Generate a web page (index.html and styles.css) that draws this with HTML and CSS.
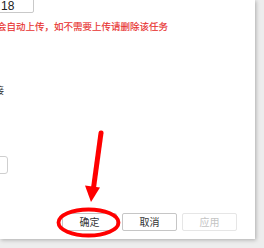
FILE: index.html
```html
<!DOCTYPE html>
<html lang="zh">
<head>
<meta charset="utf-8">
<link rel="stylesheet" href="styles.css">
</head>
<body>
<div class="stage">
  <div class="dialog">
    <div class="num-input">18</div>
    <div class="warn">会自动上传，如不需要上传请删除该任务</div>
    <div class="label">接</div>
    <div class="field"></div>
    <div class="footer">
      <button class="btn">确定</button>
      <button class="btn">取消</button>
      <button class="btn disabled">应用</button>
    </div>
  </div>
  <svg class="annot" width="264" height="248" viewBox="0 0 264 248">
    <line x1="101" y1="133" x2="93.5" y2="188" stroke="#f00" stroke-width="5" stroke-linecap="round"/>
    <polygon points="85,185.5 100,187.5 91,202" fill="#f00"/>
    <ellipse cx="88.5" cy="222.5" rx="30" ry="13" fill="none" stroke="#f00" stroke-width="3.8"/>
  </svg>
</div>
</body>
</html>
```

FILE: styles.css
```css
html, body {
  margin: 0;
  padding: 0;
}
body {
  background: #ededed;
  width: 264px;
  height: 248px;
  overflow: hidden;
  font-family: "Noto Sans CJK SC", "Liberation Sans", sans-serif;
}
.stage {
  position: relative;
  width: 264px;
  height: 248px;
}
.dialog {
  width: 255px;
  height: 239px;
  background: #fff;
  box-shadow: 1px 1px 4px rgba(0, 0, 0, 0.28);
  display: flex;
  flex-direction: column;
  overflow: hidden;
  box-sizing: border-box;
}
.num-input {
  margin-top: -6px;
  margin-left: -6px;
  width: 40px;
  height: 19px;
  box-sizing: border-box;
  border: 1px solid #c9c9c9;
  border-radius: 2px;
  font-family: "Liberation Sans", sans-serif;
  font-size: 12px;
  line-height: 22px;
  padding-left: 6px;
  color: #222;
}
.warn {
  margin-top: 7px;
  margin-left: -3px;
  font-size: 9.5px;
  line-height: 12px;
  color: #e8322f;
  white-space: nowrap;
  -webkit-text-stroke: 0.15px #e8322f;
}
.label {
  margin-top: 52px;
  margin-left: -5.5px;
  font-size: 9.5px;
  line-height: 12px;
  color: #333;
}
.field {
  margin-top: 60px;
  margin-left: -20px;
  width: 28px;
  height: 18px;
  box-sizing: border-box;
  border: 1px solid #cfcfcf;
  border-radius: 3px;
}
.footer {
  margin-top: auto;
  display: flex;
  justify-content: flex-end;
  gap: 5px;
  padding: 0 18px 8px 0;
}
.btn {
  width: 55px;
  height: 18px;
  box-sizing: border-box;
  border: 1px solid #c6c6c6;
  border-radius: 2px;
  background: #fff;
  font-family: "Noto Sans CJK SC", sans-serif;
  font-size: 10px;
  line-height: 16px;
  padding: 0;
  color: #333;
}
.btn.disabled {
  border-color: #e6e6e6;
  color: #c4c4c4;
}
.annot {
  position: absolute;
  left: 0;
  top: 0;
}
```
